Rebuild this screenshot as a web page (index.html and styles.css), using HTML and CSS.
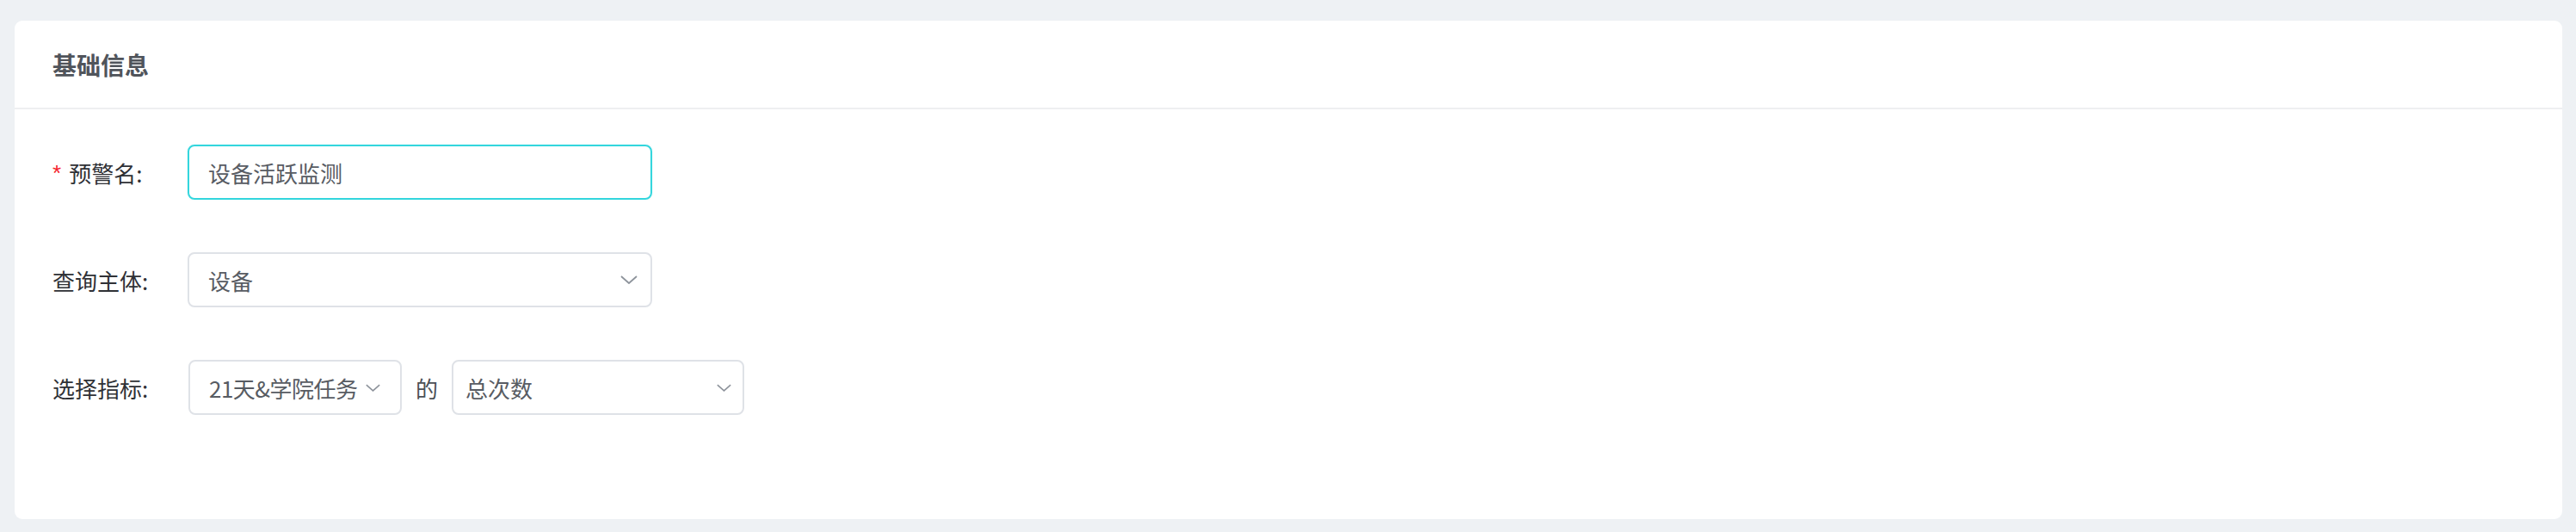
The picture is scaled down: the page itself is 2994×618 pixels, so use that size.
FILE: index.html
```html
<!DOCTYPE html>
<html lang="zh-CN">
<head>
<meta charset="utf-8">
<title>基础信息</title>
<link rel="stylesheet" href="styles.css">
</head>
<body>
<div class="card">
  <div class="card-header">基础信息</div>
  <div class="card-body">
    <div class="form-row">
      <div class="label"><span class="req">*</span>预警名:</div>
      <div class="input input-active">设备活跃监测</div>
    </div>
    <div class="form-row">
      <div class="label">查询主体:</div>
      <div class="select select-wide">
        <span>设备</span>
        <svg class="arrow arrow-lg" viewBox="0 0 20 10"><polyline points="1,1 10,9 19,1"/></svg>
      </div>
    </div>
    <div class="form-row">
      <div class="label">选择指标:</div>
      <div class="select select-auto">
        <span class="tight">21天&amp;学院任务</span>
        <svg class="arrow arrow-sm" viewBox="0 0 20 10"><polyline points="1,1 10,9 19,1"/></svg>
      </div>
      <span class="joiner">的</span>
      <div class="select select-mid">
        <span>总次数</span>
        <svg class="arrow arrow-sm" viewBox="0 0 20 10"><polyline points="1,1 10,9 19,1"/></svg>
      </div>
    </div>
  </div>
</div>
</body>
</html>
```
FILE: styles.css
```css
html, body {
  margin: 0;
  padding: 0;
}
body {
  background: #eef1f4;
  font-family: "Noto Sans CJK SC", "Noto Sans", sans-serif;
  padding: 24px 16px 15px 17px;
}
.card {
  background: #ffffff;
  border-radius: 9px;
  height: 579px;
  box-sizing: border-box;
}
.card-header {
  height: 103px;
  box-sizing: border-box;
  border-bottom: 2px solid #eeeff1;
  padding-left: 44px;
  display: flex;
  align-items: center;
  font-size: 28px;
  font-weight: 600;
  color: #50545b;
}
.card-body {
  padding: 41px 0 0 44px;
  display: flex;
  flex-direction: column;
  gap: 61px;
}
.form-row {
  display: flex;
  align-items: center;
  height: 64px;
}
.label {
  width: 157px;
  flex: none;
  font-size: 26px;
  color: #2f3136;
  display: flex;
  align-items: center;
  white-space: nowrap;
}
.req {
  color: #f5222d;
  font-family: "Liberation Sans", sans-serif;
  font-size: 26px;
  margin-right: 9px;
  position: relative;
  top: 1px;
}
.input, .select {
  height: 64px;
  box-sizing: border-box;
  border: 2px solid #dfe2e7;
  border-radius: 8px;
  font-size: 26px;
  color: #585c63;
  display: flex;
  align-items: center;
  white-space: nowrap;
  flex: none;
}
.input {
  width: 540px;
  padding-left: 22px;
}
.input-active {
  border-color: #34d6dd;
  box-shadow: 0 0 2px rgba(52, 214, 221, 0.25);
}
.select {
  justify-content: space-between;
}
.select-wide {
  width: 540px;
  padding: 0 15px 0 22px;
}
.select-auto {
  width: 248px;
  padding: 0 0 0 22px;
  justify-content: flex-start;
  gap: 9px;
  margin-left: 1px;
  overflow: hidden;
}
.tight {
  letter-spacing: -0.5px;
}
.select-mid {
  width: 340px;
  padding: 0 13px 0 14px;
}
.joiner {
  font-size: 26px;
  color: #4b4f56;
  margin: 0 16px;
}
.arrow {
  fill: none;
  stroke: #8d939b;
  stroke-width: 1.8;
  flex: none;
}
.arrow-lg {
  width: 20px;
  height: 10px;
}
.arrow-sm {
  width: 17px;
  height: 9px;
}
```
